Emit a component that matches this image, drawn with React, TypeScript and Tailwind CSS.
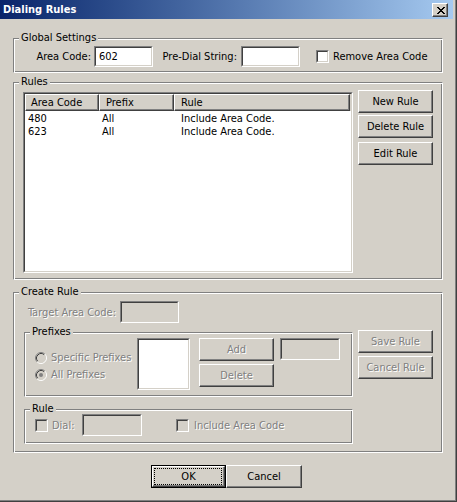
import React from "react";

const DIS = "text-[#808080] [text-shadow:1px_1px_0_#ffffff]";

function Sunken({
  className = "",
  innerClass = "",
  children,
}: {
  className?: string;
  innerClass?: string;
  children?: React.ReactNode;
}) {
  return (
    <div
      className={`shrink-0 border border-t-[#808080] border-l-[#808080] border-r-white border-b-white ${className}`}
    >
      <div
        className={`h-full w-full border border-t-[#404040] border-l-[#404040] border-r-[#d4d0c8] border-b-[#d4d0c8] ${innerClass}`}
      >
        {children}
      </div>
    </div>
  );
}

function Btn({
  children,
  disabled,
  className = "",
}: {
  children: React.ReactNode;
  disabled?: boolean;
  className?: string;
}) {
  return (
    <div
      className={`flex shrink-0 items-center justify-center border border-t-white border-l-white border-r-[#404040] border-b-[#404040] bg-[#d4d0c8] shadow-[inset_-1px_-1px_0_#808080] ${className}`}
    >
      <span className={disabled ? DIS : ""}>{children}</span>
    </div>
  );
}

function Group({
  label,
  className = "",
  children,
}: {
  label: string;
  className?: string;
  children?: React.ReactNode;
}) {
  return (
    <div
      className={`relative shrink-0 border border-t-[#808080] border-l-[#808080] border-r-white border-b-white shadow-[inset_1px_1px_0_#ffffff,inset_-1px_-1px_0_#808080] ${className}`}
    >
      <span className="absolute left-[5px] top-[-8px] bg-[#d4d0c8] px-[2px] leading-[13px] whitespace-nowrap">
        {label}
      </span>
      {children}
    </div>
  );
}

function Check({ disabled }: { disabled?: boolean }) {
  return (
    <Sunken
      className="h-[13px] w-[13px]"
      innerClass={disabled ? "bg-[#d4d0c8]" : "bg-white"}
    />
  );
}

function Radio({ checked }: { checked?: boolean }) {
  return (
    <svg width="12" height="12" viewBox="0 0 12 12" className="shrink-0">
      <circle cx="6" cy="6" r="4" fill="#d4d0c8" />
      <path d="M2.11 9.89 A5.5 5.5 0 0 1 9.89 2.11" fill="none" stroke="#808080" />
      <path d="M9.89 2.11 A5.5 5.5 0 0 1 2.11 9.89" fill="none" stroke="#ffffff" />
      <path d="M2.82 9.18 A4.5 4.5 0 0 1 9.18 2.82" fill="none" stroke="#404040" />
      <path d="M9.18 2.82 A4.5 4.5 0 0 1 2.82 9.18" fill="none" stroke="#d4d0c8" />
      {checked && <circle cx="6" cy="6" r="2" fill="#808080" />}
    </svg>
  );
}

function HeaderCell({
  w,
  pl,
  children,
}: {
  w: string;
  pl: string;
  children: React.ReactNode;
}) {
  return (
    <div
      className={`${w} ${pl} flex shrink-0 items-center border border-t-white border-l-white border-r-[#404040] border-b-[#404040] shadow-[inset_-1px_-1px_0_#808080]`}
    >
      {children}
    </div>
  );
}

const rows = [
  { code: "480", prefix: "All", rule: "Include Area Code." },
  { code: "623", prefix: "All", rule: "Include Area Code." },
];

export default function App() {
  return (
    <div className="relative h-[502px] w-[457px] overflow-hidden bg-[#d4d0c8] font-['DejaVu_Sans_Condensed','Liberation_Sans',Arial,sans-serif] text-[11px] leading-[13px] text-black shadow-[inset_-1px_-1px_0_#404040,inset_-2px_-2px_0_#808080]">
      {/* Title bar */}
      <div className="mr-[4px] flex h-[19px] items-center bg-linear-to-r from-[#0a246a] to-[#a6caf0] pl-[3px] pr-[5px]">
        <span className="font-bold text-white">Dialing Rules</span>
        <div className="ml-auto flex h-[14px] w-[16px] items-center justify-center self-start mt-[3px] border border-t-white border-l-white border-r-[#404040] border-b-[#404040] bg-[#d4d0c8] pl-[1px] shadow-[inset_-1px_-1px_0_#808080]">
          <svg width="8" height="7" viewBox="0 0 8 7" shapeRendering="crispEdges">
            <path
              fill="#000"
              d="M0 0h2v1H0z M6 0h2v1H6z M1 1h2v1H1z M5 1h2v1H5z M2 2h4v1H2z M3 3h2v1H3z M2 4h4v1H2z M1 5h2v1H1z M5 5h2v1H5z M0 6h2v1H0z M6 6h2v1H6z"
            />
          </svg>
        </div>
      </div>

      <div className="flex flex-col pl-[13px] pt-[19px]">
        {/* Global Settings */}
        <Group label="Global Settings" className="h-[35px] w-[430px]">
          <div className="flex items-center pt-[7px]">
            <span className="w-[80px] shrink-0 pr-[3px] text-right">Area Code:</span>
            <Sunken
              className="h-[21px] w-[59px]"
              innerClass="bg-white flex items-center pl-[3px]"
            >
              602
            </Sunken>
            <span className="w-[88px] shrink-0 pr-[4px] text-right">Pre-Dial String:</span>
            <Sunken className="h-[21px] w-[59px]" innerClass="bg-white" />
            <div className="ml-[16px]">
              <Check />
            </div>
            <span className="ml-[4px] whitespace-nowrap">Remove Area Code</span>
          </div>
        </Group>

        {/* Rules */}
        <Group label="Rules" className="mt-[9px] h-[198px] w-[430px]">
          <div className="flex items-start pl-[9px]">
            <Sunken
              className="mt-[9px] h-[181px] w-[330px]"
              innerClass="bg-white flex flex-col"
            >
              <div className="flex h-[17px] shrink-0 bg-[#d4d0c8]">
                <HeaderCell w="w-[74px]" pl="pl-[5px]">
                  Area Code
                </HeaderCell>
                <HeaderCell w="w-[75px]" pl="pl-[6px]">
                  Prefix
                </HeaderCell>
                <HeaderCell w="w-[176px]" pl="pl-[6px]">
                  Rule
                </HeaderCell>
                <div className="flex-1" />
              </div>
              <div className="flex flex-col pt-[1px]">
                {rows.map((r) => (
                  <div key={r.code} className="flex h-[13px] leading-[13px]">
                    <span className="w-[74px] shrink-0 pl-[3px]">{r.code}</span>
                    <span className="w-[75px] shrink-0 pl-[3px]">{r.prefix}</span>
                    <span className="w-[176px] shrink-0 pl-[7px]">{r.rule}</span>
                  </div>
                ))}
              </div>
            </Sunken>
            <div className="ml-[5px] mt-[7px] flex flex-col">
              <Btn className="h-[23px] w-[75px]">New Rule</Btn>
              <Btn className="mt-[2px] h-[23px] w-[75px]">Delete Rule</Btn>
              <Btn className="mt-[4px] h-[23px] w-[75px]">Edit Rule</Btn>
            </div>
          </div>
        </Group>

        {/* Create Rule */}
        <Group label="Create Rule" className="mt-[12px] h-[161px] w-[430px]">
          <div className="mt-[8px] flex items-center">
            <span className={`w-[106px] shrink-0 pr-[4px] text-right ${DIS}`}>
              Target Area Code:
            </span>
            <Sunken className="h-[22px] w-[59px]" innerClass="bg-[#d4d0c8]" />
          </div>
          <div className="ml-[10px] mt-[7px] flex items-start">
            <div className="flex w-[329px] flex-col">
              <Group label="Prefixes" className="mt-[2px] h-[65px] w-[329px]">
                <div className="flex items-start pt-[5px]">
                  <div className="flex w-[112px] shrink-0 flex-col pl-[10px] pt-[11px]">
                    <div className="flex h-[17px] items-center">
                      <Radio />
                      <span className={`ml-[4px] whitespace-nowrap ${DIS}`}>
                        Specific Prefixes
                      </span>
                    </div>
                    <div className="flex h-[17px] items-center">
                      <Radio checked />
                      <span className={`ml-[4px] whitespace-nowrap ${DIS}`}>
                        All Prefixes
                      </span>
                    </div>
                  </div>
                  <Sunken className="h-[52px] w-[53px]" innerClass="bg-white" />
                  <div className="ml-[9px] flex flex-col">
                    <Btn disabled className="h-[23px] w-[75px]">
                      Add
                    </Btn>
                    <Btn disabled className="mt-[3px] h-[23px] w-[75px]">
                      Delete
                    </Btn>
                  </div>
                  <Sunken className="ml-[6px] h-[22px] w-[60px]" innerClass="bg-[#d4d0c8]" />
                </div>
              </Group>
              <Group label="Rule" className="mt-[12px] h-[35px] w-[329px]">
                <div className="flex items-center pl-[10px] pt-[4px]">
                  <Check disabled />
                  <span className={`ml-[4px] w-[30px] shrink-0 ${DIS}`}>Dial:</span>
                  <Sunken className="h-[22px] w-[60px]" innerClass="bg-[#d4d0c8]" />
                  <div className="ml-[34px]">
                    <Check disabled />
                  </div>
                  <span className={`ml-[5px] whitespace-nowrap ${DIS}`}>
                    Include Area Code
                  </span>
                </div>
              </Group>
            </div>
            <div className="ml-[5px] flex flex-col">
              <Btn disabled className="h-[23px] w-[75px]">
                Save Rule
              </Btn>
              <Btn disabled className="mt-[3px] h-[23px] w-[75px]">
                Cancel Rule
              </Btn>
            </div>
          </div>
        </Group>

        {/* Bottom buttons */}
        <div className="ml-[138px] mt-[12px] flex">
          <div className="h-[23px] w-[75px] shrink-0 border border-black">
            <div className="relative flex h-full w-full items-center justify-center border border-t-white border-l-white border-r-[#404040] border-b-[#404040] shadow-[inset_-1px_-1px_0_#808080]">
              <span>OK</span>
              <span className="absolute bottom-[1px] left-[1px] right-[2px] top-[1px] border border-dotted border-black" />
            </div>
          </div>
          <Btn className="h-[23px] w-[76px]">Cancel</Btn>
        </div>
      </div>
    </div>
  );
}
